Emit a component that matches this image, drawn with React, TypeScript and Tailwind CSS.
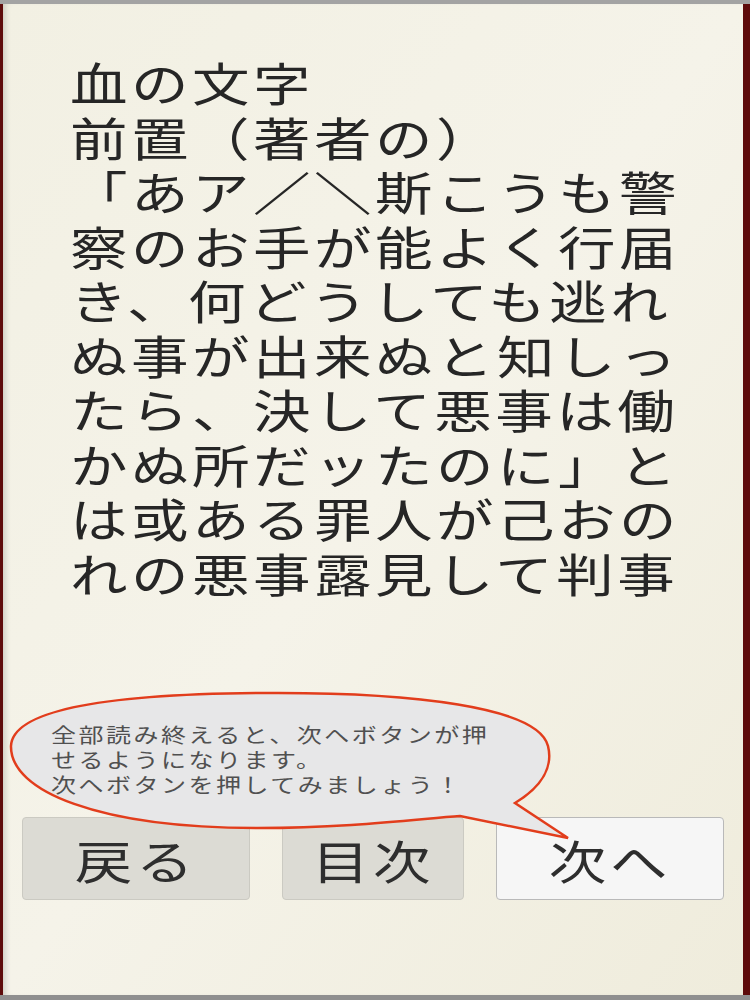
const bodyLines = [
  '血の文字',
  '前置（著者の）',
  '「あア／＼斯こうも警',
  '察のお手が能よく行届',
  'き、何どうしても逃れ',
  'ぬ事が出来ぬと知しっ',
  'たら、決して悪事は働',
  'かぬ所だッたのに」と',
  'は或ある罪人が己おの',
  'れの悪事露見して判事',
]

const jp = "font-['Noto_Sans_CJK_JP','Noto_Sans',sans-serif]"

function SpeechBubble() {
  return (
    <div className="absolute left-[5px] top-[687px] h-[150px] w-[564px]">
      <svg className="absolute inset-0" width="564" height="150" viewBox="0 0 564 150">
        <path
          d="M 507 112 C 535 95, 545 75, 540 55 C 530 15, 400 2, 270 2 C 120 2, 5 15, 3 55 C 2 100, 90 137, 250 137 C 340 137, 410 128, 452 125 L 560 147 Z"
          fill="#e7e7e8"
          stroke="#e23d1c"
          strokeWidth="2.5"
          strokeLinejoin="miter"
        />
      </svg>
      <div className="relative pl-[43px] pt-[31px]">
        <div className={`${jp} w-fit origin-left scale-x-[1.25] text-[20px] leading-[25px] tracking-[2px] text-[#505050]`}>
          全部読み終えると、次へボタンが押
          <br />
          せるようになります。
          <br />
          次へボタンを押してみましょう！
        </div>
      </div>
    </div>
  )
}

function NavButton({ label, active, wide }: { label: string; active?: boolean; wide?: boolean }) {
  return (
    <button
      className={`flex h-[83px] items-center justify-center rounded-[4px] border ${
        wide ? 'w-[228px]' : 'w-[182px]'
      } ${active ? 'border-[#b9b9b9] bg-[#f6f6f6]' : 'border-[#cbcac2] bg-[#dcdbd4]'}`}
    >
      <span className={`${jp} inline-block scale-x-[1.25] text-[46px] leading-none tracking-[3px] text-[#2e2e2e]`}>
        {label}
      </span>
    </button>
  )
}

export default function App() {
  return (
    <div className="flex h-[1000px] w-[750px] flex-col overflow-hidden bg-[#9c9c9c]">
      <div className="h-[4px] bg-[#a3a3a3]" />
      <div className="flex flex-1">
        <div className="w-[3px] bg-[#5e0b0b]" />
        <main className="relative flex-1 bg-gradient-to-br from-[#f2f0e3] via-[#f5f3e9] to-[#efecdc] shadow-[inset_6px_0_6px_-4px_rgba(0,0,0,0.18)]">
          <div className="pl-[67px] pt-[50px]">
            {bodyLines.map((line, i) => (
              <div
                key={i}
                className={`${jp} w-fit origin-left scale-x-[1.25] whitespace-nowrap text-[46px] leading-[54.5px] tracking-[2.8px] text-[#262626]`}
              >
                {line}
              </div>
            ))}
          </div>

          <div className="mt-[218px] flex gap-[32px] pl-[19px]">
            <NavButton label="戻る" wide />
            <NavButton label="目次" />
            <NavButton label="次へ" wide active />
          </div>

          <SpeechBubble />
        </main>
        <div className="w-[7px] bg-[#5e0b0b]" />
      </div>
      <div className="h-[5px] bg-[#8f8f8f]" />
    </div>
  )
}
